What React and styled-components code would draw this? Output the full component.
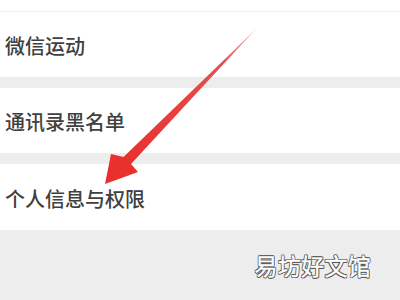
import React from 'react';
import styled, { createGlobalStyle } from 'styled-components';

const GlobalStyle = createGlobalStyle`
  html, body {
    margin: 0;
    padding: 0;
    background: #ededed;
    font-family: "Noto Sans CJK SC", "Noto Sans", sans-serif;
  }
`;

const Page = styled.div`
  position: relative;
  width: 400px;
  height: 300px;
  overflow: hidden;
  background: #ededed;
  display: flex;
  flex-direction: column;
`;

const TopStrip = styled.div`
  height: 11px;
  background: #fff;
  border-bottom: 1px solid #f0f0f0;
`;

const Group = styled.div`
  background: #fff;
  margin-bottom: ${({ gap }) => gap}px;
`;

const Row = styled.div`
  height: ${({ h }) => h}px;
  display: flex;
  align-items: center;
  padding: 2px 0 0 5px;
  box-sizing: border-box;
  font-size: 20px;
  font-weight: 500;
  color: #404040;
`;

const Footer = styled.div`
  flex: 1;
  display: flex;
  justify-content: flex-end;
  align-items: flex-start;
  padding: 22px 29px 0 0;
`;

const Watermark = styled.span`
  font-size: 23px;
  line-height: 1.2;
  color: #fff;
  letter-spacing: 0.3px;
  -webkit-text-stroke: 0.4px #fff;
  text-shadow:
    0.8px 0 0 #555, -0.8px 0 0 #555, 0 0.8px 0 #555, 0 -0.8px 0 #555,
    0.8px 0.8px 0 #555, -0.8px -0.8px 0 #555, 0.8px -0.8px 0 #555, -0.8px 0.8px 0 #555;
`;

const ArrowLayer = styled.svg`
  position: absolute;
  left: 0;
  top: 0;
  pointer-events: none;
`;

const Arrow = () => (
  <ArrowLayer width="400" height="300" viewBox="0 0 400 300">
    <defs>
      <linearGradient id="shaft" x1="256" y1="29" x2="124" y2="163" gradientUnits="userSpaceOnUse">
        <stop offset="0" stopColor="#e9b7b7" />
        <stop offset="0.25" stopColor="#e45050" />
        <stop offset="1" stopColor="#e8302c" />
      </linearGradient>
    </defs>
    <polygon
      points="256,29 131,164 138,172 105,184 111,154 123.5,157"
      fill="url(#shaft)"
    />
  </ArrowLayer>
);

export default function App() {
  return (
    <>
      <GlobalStyle />
      <Page>
        <TopStrip />
        <Group gap={11}>
          <Row h={65}>微信运动</Row>
        </Group>
        <Group gap={11}>
          <Row h={65}>通讯录黑名单</Row>
        </Group>
        <Group gap={0}>
          <Row h={66}>个人信息与权限</Row>
        </Group>
        <Footer>
          <Watermark>易坊好文馆</Watermark>
        </Footer>
        <Arrow />
      </Page>
    </>
  );
}
